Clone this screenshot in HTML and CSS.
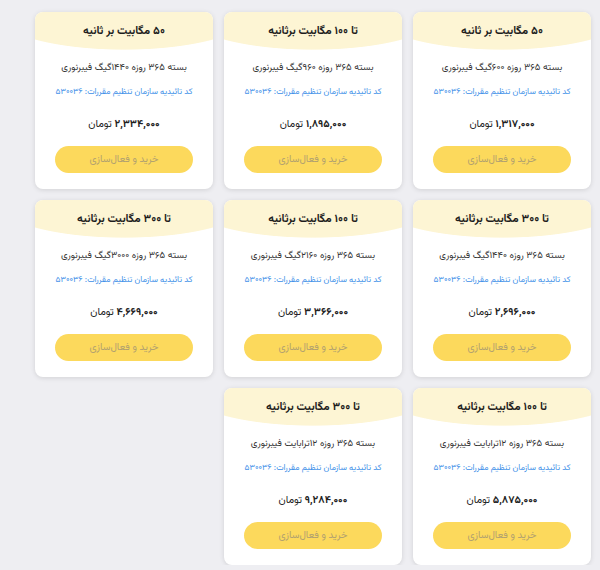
FILE: index.html
```html
<!DOCTYPE html>
<html lang="fa" dir="rtl">
<head>
    <meta charset="UTF-8">
    <meta name="viewport" content="width=device-width, initial-scale=1.0">
    <title>بسته‌های اینترنت فیبر نوری</title>
    <link rel="stylesheet" href="styles.css">
</head>
<body>
    <div class="plans">
        <div class="plan">
            <div class="plan-head">۵۰ مگابیت بر ثانیه</div>
            <p class="plan-desc">بسته ۳۶۵ روزه ۶۰۰گیگ فیبرنوری</p>
            <p class="plan-code">کد تائیدیه سازمان تنظیم مقررات: ۵۳۰۰۳۶</p>
            <p class="plan-price"><b>۱,۳۱۷,۰۰۰</b> تومان</p>
            <button class="buy-button">خرید و فعال‌سازی</button>
        </div>
        <div class="plan">
            <div class="plan-head">تا ۱۰۰ مگابیت برثانیه</div>
            <p class="plan-desc">بسته ۳۶۵ روزه ۹۶۰گیگ فیبرنوری</p>
            <p class="plan-code">کد تائیدیه سازمان تنظیم مقررات: ۵۳۰۰۳۶</p>
            <p class="plan-price"><b>۱,۸۹۵,۰۰۰</b> تومان</p>
            <button class="buy-button">خرید و فعال‌سازی</button>
        </div>
        <div class="plan">
            <div class="plan-head">۵۰ مگابیت بر ثانیه</div>
            <p class="plan-desc">بسته ۳۶۵ روزه ۱۴۴۰گیگ فیبرنوری</p>
            <p class="plan-code">کد تائیدیه سازمان تنظیم مقررات: ۵۳۰۰۳۶</p>
            <p class="plan-price"><b>۲,۳۳۴,۰۰۰</b> تومان</p>
            <button class="buy-button">خرید و فعال‌سازی</button>
        </div>

        <div class="plan">
            <div class="plan-head">تا ۳۰۰ مگابیت برثانیه</div>
            <p class="plan-desc">بسته ۳۶۵ روزه ۱۴۴۰گیگ فیبرنوری</p>
            <p class="plan-code">کد تائیدیه سازمان تنظیم مقررات: ۵۳۰۰۳۶</p>
            <p class="plan-price"><b>۲,۶۹۶,۰۰۰</b> تومان</p>
            <button class="buy-button">خرید و فعال‌سازی</button>
        </div>
        <div class="plan">
            <div class="plan-head">تا ۱۰۰ مگابیت برثانیه</div>
            <p class="plan-desc">بسته ۳۶۵ روزه ۲۱۶۰گیگ فیبرنوری</p>
            <p class="plan-code">کد تائیدیه سازمان تنظیم مقررات: ۵۳۰۰۳۶</p>
            <p class="plan-price"><b>۳,۳۶۶,۰۰۰</b> تومان</p>
            <button class="buy-button">خرید و فعال‌سازی</button>
        </div>
        <div class="plan">
            <div class="plan-head">تا ۳۰۰ مگابیت برثانیه</div>
            <p class="plan-desc">بسته ۳۶۵ روزه ۳۰۰۰گیگ فیبرنوری</p>
            <p class="plan-code">کد تائیدیه سازمان تنظیم مقررات: ۵۳۰۰۳۶</p>
            <p class="plan-price"><b>۴,۶۶۹,۰۰۰</b> تومان</p>
            <button class="buy-button">خرید و فعال‌سازی</button>
        </div>

        <div class="plan">
            <div class="plan-head">تا ۱۰۰ مگابیت برثانیه</div>
            <p class="plan-desc">بسته ۳۶۵ روزه ۱۲ترابایت فیبرنوری</p>
            <p class="plan-code">کد تائیدیه سازمان تنظیم مقررات: ۵۳۰۰۳۶</p>
            <p class="plan-price"><b>۵,۸۷۵,۰۰۰</b> تومان</p>
            <button class="buy-button">خرید و فعال‌سازی</button>
        </div>
        <div class="plan">
            <div class="plan-head">تا ۳۰۰ مگابیت برثانیه</div>
            <p class="plan-desc">بسته ۳۶۵ روزه ۱۲ترابایت فیبرنوری</p>
            <p class="plan-code">کد تائیدیه سازمان تنظیم مقررات: ۵۳۰۰۳۶</p>
            <p class="plan-price"><b>۹,۲۸۴,۰۰۰</b> تومان</p>
            <button class="buy-button">خرید و فعال‌سازی</button>
        </div>
    </div>
</body>
</html>
```

FILE: styles.css
```css
/* صفحه */
body {
    margin: 0;
    background-color: #eeeef2;
    font-family: "Vazirmatn", "DejaVu Sans", sans-serif;
    color: #222;
}

.plans {
    display: grid;
    grid-template-columns: repeat(3, 178px);
    grid-auto-rows: 177px;
    gap: 11px;
    padding: 12px 9px 0 0;
}

/* کارت هر بسته */
.plan {
    background-color: #fff;
    border-radius: 8px;
    box-shadow: 0 1px 5px rgba(0, 0, 0, 0.12);
    overflow: hidden;
    display: flex;
    flex-direction: column;
    align-items: center;
    text-align: center;
    line-height: 16px;
}

.plan-head {
    width: 100%;
    height: 40px;
    padding-top: 11px;
    box-sizing: border-box;
    background: radial-gradient(ellipse 74% 38px at 50% 0, #fdf5d4 98%, transparent 100%);
    font-size: 11.3px;
    font-weight: bold;
    color: #1d1d1d;
}

.plan-desc {
    margin: 8px 0 0;
    font-size: 9.5px;
    color: #333;
}

.plan-code {
    margin: 8px 0 0;
    font-size: 8.4px;
    color: #3d8fe8;
}

.plan-price {
    margin: 17px 0 0;
    font-size: 10.5px;
    color: #222;
}

.plan-price b {
    font-weight: bold;
}

/* دکمه خرید */
.buy-button {
    width: 138px;
    height: 27px;
    margin-top: 13px;
    border: none;
    border-radius: 14px;
    background-color: #fcd95c;
    color: #b3a26f;
    font-family: "Vazirmatn", "DejaVu Sans", sans-serif;
    font-size: 10px;
    cursor: pointer;
}
```
